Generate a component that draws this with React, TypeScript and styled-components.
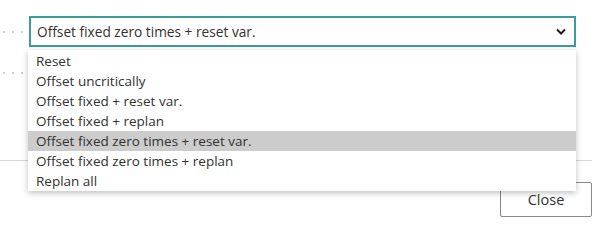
import React from "react";
import styled, { createGlobalStyle } from "styled-components";

const Global = createGlobalStyle`
  html, body { margin: 0; padding: 0; background: #ffffff; }
  body { font-family: "Open Sans", "Noto Sans", sans-serif; color: #323130; }
`;

const Page = styled.div`
  position: relative;
  width: 597px;
  height: 235px;
  overflow: hidden;
  background: #fff;
`;

const Form = styled.div`
  display: flex;
  flex-direction: column;
  padding-top: 16px;
  height: 160px;
  box-sizing: border-box;
`;

const FieldRow = styled.div<{ $h: number }>`
  display: flex;
  align-items: center;
  height: ${(p) => p.$h}px;
`;

const Dots = styled.div`
  width: 29px;
  flex: none;
  display: flex;
  gap: 7px;
  padding-left: 3px;
  box-sizing: border-box;
  & > span {
    width: 2px;
    height: 2px;
    background: #d0d0d0;
  }
`;

const SelectWrap = styled.div`
  position: relative;
  width: 547px;
`;

const SelectBox = styled.div`
  box-sizing: border-box;
  height: 31px;
  border: 2px solid #3c9c99;
  display: flex;
  align-items: center;
  padding: 0 6px 0 6px;
  font-size: 13.7px;
  color: #323130;
`;

const SelectText = styled.span`
  flex: 1;
`;

const Chevron = styled.svg`
  width: 10px;
  height: 8px;
  margin-right: 2px;
`;

const List = styled.ul`
  position: absolute;
  top: 34px;
  left: -1px;
  width: 548px;
  margin: 0;
  padding: 1px 0 0;
  list-style: none;
  background: #fff;
  box-shadow: 0 2px 6px rgba(0, 0, 0, 0.25);
  z-index: 2;
`;

const Item = styled.li<{ $active?: boolean }>`
  height: 20px;
  line-height: 20px;
  padding-left: 8px;
  font-size: 13.5px;
  color: #323130;
  background: ${(p) => (p.$active ? "#cccccc" : "transparent")};
`;

const Divider = styled.div`
  width: 592px;
  height: 1px;
  background: #d6d6d6;
`;

const Footer = styled.div`
  display: flex;
  justify-content: flex-end;
  padding: 21px 5px 0 0;
`;

const Button = styled.button`
  width: 92px;
  height: 35px;
  box-sizing: border-box;
  border: 1px solid #8a8886;
  border-radius: 2px;
  background: #fff;
  font-family: "Open Sans", "Noto Sans", sans-serif;
  font-size: 14.5px;
  color: #323130;
  padding: 0;
`;

const options = [
  "Reset",
  "Offset uncritically",
  "Offset fixed + reset var.",
  "Offset fixed + replan",
  "Offset fixed zero times + reset var.",
  "Offset fixed zero times + replan",
  "Replan all",
];

const DotLabel = () => (
  <Dots>
    <span />
    <span />
    <span />
  </Dots>
);

export default function App() {
  const selected = "Offset fixed zero times + reset var.";
  return (
    <Page>
      <Global />
      <Form>
        <FieldRow $h={31}>
          <DotLabel />
          <SelectWrap>
            <SelectBox>
              <SelectText>{selected}</SelectText>
              <Chevron viewBox="0 0 10 8">
                <path d="M1 1.5 L5 5.5 L9 1.5" fill="none" stroke="#201f1e" strokeWidth="2" />
              </Chevron>
            </SelectBox>
            <List>
              {options.map((o) => (
                <Item key={o} $active={o === selected}>
                  {o}
                </Item>
              ))}
            </List>
          </SelectWrap>
        </FieldRow>
        <FieldRow $h={52}>
          <DotLabel />
        </FieldRow>
      </Form>
      <Divider />
      <Footer>
        <Button>Close</Button>
      </Footer>
    </Page>
  );
}
